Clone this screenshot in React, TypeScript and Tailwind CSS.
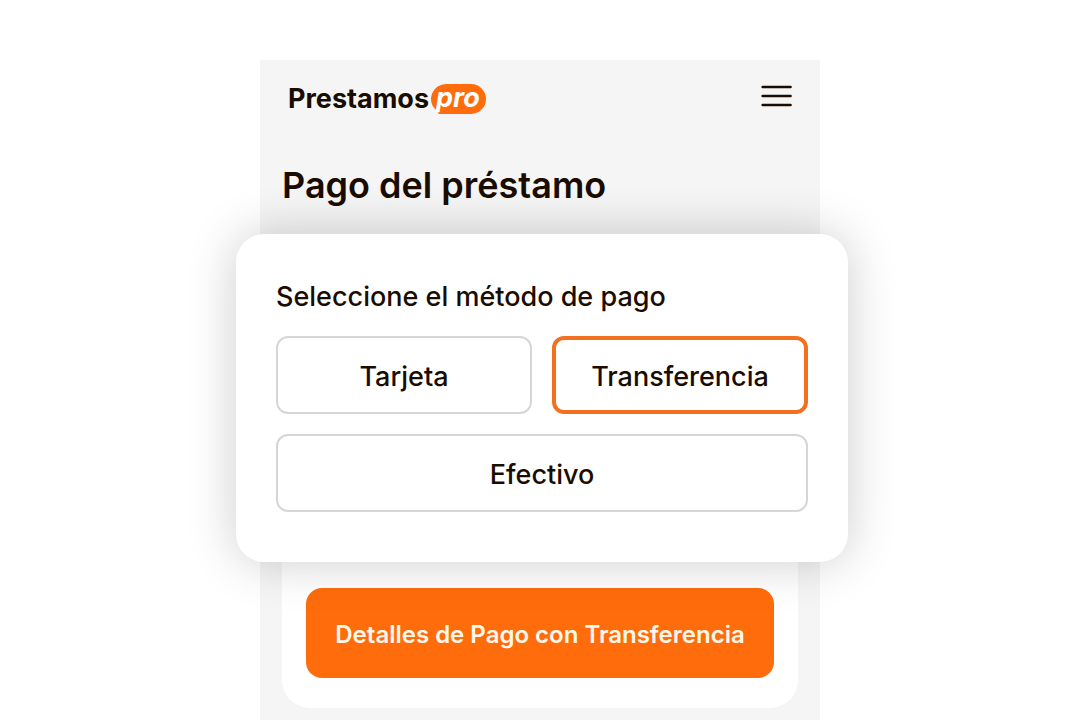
import { useState } from "react";

const methods = [
  { id: "tarjeta", label: "Tarjeta", wide: false },
  { id: "transferencia", label: "Transferencia", wide: false },
  { id: "efectivo", label: "Efectivo", wide: true },
];

function Logo() {
  return (
    <a href="/" className="flex h-[30px] items-center gap-px" aria-label="Prestamos pro">
      <span className="text-[27px] leading-[30px] font-bold">Prestamos</span>
      <svg width="56" height="30" viewBox="0 0 56 30" className="overflow-visible" aria-hidden="true">
        <path d="M16 0h25a15 15 0 0 1 0 30H9l-3.600-4.400A15 15 0 0 1 16 0Z" fill="#ff6c0c" />
        <text x="6" y="23" fill="#fff" fontSize="27" fontWeight="700" fontStyle="italic">
          pro
        </text>
      </svg>
    </a>
  );
}

export default function App() {
  const [method, setMethod] = useState("transferencia");

  return (
    <div className="flex min-h-screen flex-col bg-white pt-15 pr-0.5 font-['Inter',sans-serif] text-[#1a0c00]">
      <main className="mx-auto w-full max-w-[560px] flex-1 bg-[#f5f5f5] pb-3">
        <header className="flex items-start justify-between px-7 pt-6">
          <Logo />
          <button type="button" aria-label="Menú">
            <svg width="32" height="24" viewBox="0 0 32 24" stroke="currentColor" strokeWidth="2.4" strokeLinecap="round">
              <path d="M2.600 3h28M2.600 12h28M2.600 21h28" />
            </svg>
          </button>
        </header>

        <h1 className="mt-12 px-[22px] text-4xl leading-[46px] font-semibold">Pago del préstamo</h1>

        <section className="relative z-10 mt-[26px] -mr-7 -ml-6 rounded-[28px] bg-white px-10 pt-12 pb-[50px] shadow-[0_0_50px_rgba(0,0,0,0.2)]">
          <h2 id="method-title" className="text-[27px] leading-[30px] font-medium">
            Seleccione el método de pago
          </h2>
          <div role="radiogroup" aria-labelledby="method-title" className="mt-6 grid grid-cols-2 gap-5">
            {methods.map((m) => (
              <label
                key={m.id}
                className={`flex h-[78px] cursor-pointer items-center justify-center rounded-xl pt-1 text-[27px] leading-[30px] font-medium ${
                  m.wide ? "col-span-2" : ""
                } ${method === m.id ? "border-4 border-[#f37021]" : "border-2 border-[#d6d6d6]"}`}
              >
                <input
                  type="radio"
                  name="method"
                  value={m.id}
                  checked={method === m.id}
                  onChange={() => setMethod(m.id)}
                  className="sr-only"
                />
                {m.label}
              </label>
            ))}
          </div>
        </section>

        <div className="mx-[22px] -mt-7 rounded-b-[28px] bg-white px-6 pt-[54px] pb-[30px]">
          <button
            type="button"
            className="flex h-[90px] w-full items-center justify-center rounded-2xl bg-[#ff6c0c] pt-1 text-2xl font-semibold text-[#fff8ea]"
          >
            Detalles de Pago con Transferencia
          </button>
        </div>
      </main>
    </div>
  );
}
